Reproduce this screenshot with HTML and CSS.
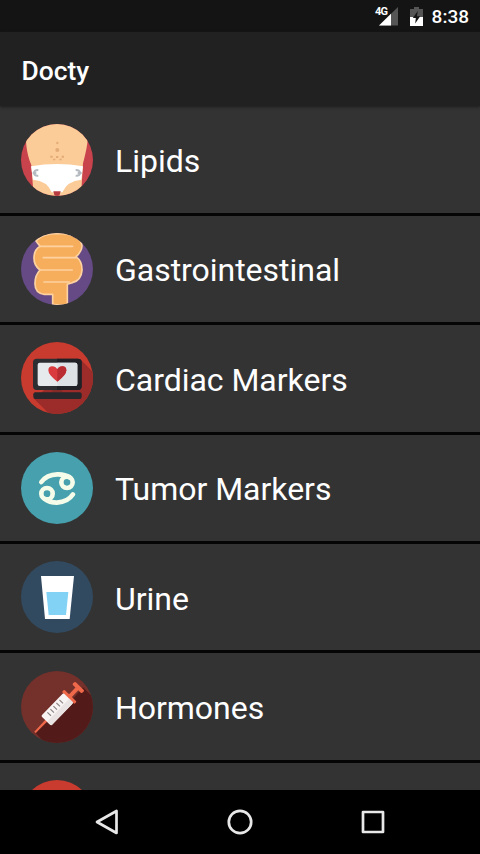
FILE: index.html
```
<!DOCTYPE html>
<html lang="en">
<head>
<meta charset="utf-8">
<title>Docty</title>
<link rel="stylesheet" href="styles.css">
</head>
<body>
<div class="screen">
  <div class="status">
    <svg class="signal" viewBox="0 0 26 22"><path d="M25 1V19.5H6Z" fill="#555"/><path d="M18 7.8V19.5H6Z" fill="#fff"/></svg>
    <span class="net">4G</span>
    <svg class="battery" viewBox="0 0 13 20"><path d="M4 0h5v2h4v8H0V2h4Z" fill="#555"/><path d="M0 10h13v9H0Z" fill="#fff"/><path d="M7.8 4 2.8 11h3L5.2 16.5 10.2 9.3H7Z" fill="#151515"/></svg>
    <span class="clock">8:38</span>
  </div>
  <header class="bar"><h1>Docty</h1></header>
  <main class="list">
    <div class="row">
      <svg class="icon" viewBox="27 27 216 216">
        <clipPath id="c"><circle cx="135" cy="135" r="108"/></clipPath>
        <g clip-path="url(#c)">
          <path fill="#c8434c" d="M27 27h216v216H27Z"/>
          <path fill="#fbcb98" d="M44 27H228C231 70 224 105 213 145L207 243H65L58 150C43 115 38 70 44 27Z"/>
          <path fill="#fff" d="M57 154Q135 140 213 154L208 194Q165 198 151 232H119Q107 198 63 194Z"/>
          <path fill="#b63b40" d="M124 229h22l-4 14h-14Z"/>
          <g fill="none" stroke="#b4babf" stroke-width="6"><path d="M79 165Q66 165 66 174T79 182M62 174h11M191 165Q204 165 204 174T191 182M197 174h12"/></g>
          <g fill="#e3ab76"><circle cx="136" cy="84" r="3.5"/><circle cx="136" cy="105" r="6"/><path d="M115 122h7v6h-7ZM132 123h7v6h-7ZM149 122h7v6h-7ZM123 131h7v5h-7ZM142 131h7v5h-7Z"/></g>
        </g>
      </svg>
      <span>Lipids</span>
    </div>
    <div class="row">
      <svg class="icon" viewBox="27 27 216 216">
        <g clip-path="url(#c)">
          <path fill="#654a86" d="M27 27h216v216H27Z"/>
          <path fill="#f6ae5c" stroke="#fdd2a0" stroke-width="5" stroke-linejoin="round" d="M72 51Q88 29 137 28Q208 30 210 66Q209 83 192 98Q211 112 210 139Q208 169 181 176L166 181V241Q145 245 122 241V211H97Q68 207 69 177Q69 154 84 138Q65 124 66 100Q67 77 84 67Z"/>
          <path fill="none" stroke="#fdd2a0" stroke-width="5" stroke-linecap="round" d="M84 67H182M94 101H192M84 138H181M96 174H172"/>
        </g>
      </svg>
      <span>Gastrointestinal</span>
    </div>
    <div class="row">
      <svg class="icon" viewBox="27 27 216 216">
        <g clip-path="url(#c)">
          <path fill="#c93b2e" d="M27 27h216v216H27Z"/>
          <path fill="#9b2c29" d="M205 79 243 117V243H112L66 197Z"/>
          <rect x="63" y="77" width="146" height="94" rx="11" fill="#2d2e32"/>
          <path fill="#202127" d="M135 77h63q11 0 11 11v72q0 11-11 11h-63Z"/>
          <rect x="77" y="89" width="119" height="70" rx="6" fill="#e6eaed"/>
          <path fill="#dce1e5" d="M136 89h54q6 0 6 6v58q0 6-6 6h-54Z"/>
          <path fill="#d93b3e" d="M136 146Q109 126 109 112Q109 100 121 100Q131 100 136 109Q141 100 151 100Q163 100 163 112Q163 126 136 146Z"/>
          <path fill="#b92c31" d="M136 109Q141 100 151 100Q163 100 163 112Q163 126 136 146Z"/>
          <path fill="#842b28" d="M121 171h30v8h-30Z"/>
          <rect x="64" y="178" width="145" height="20" rx="6" fill="#27272c"/>
        </g>
      </svg>
      <span>Cardiac Markers</span>
    </div>
    <div class="row">
      <svg class="icon" viewBox="27 27 216 216">
        <circle cx="135" cy="135" r="108" fill="#46a0ae"/>
        <g fill="none" stroke="#f5fce9" stroke-width="14" stroke-linecap="round"><circle cx="165" cy="118" r="17"/><circle cx="105" cy="152" r="17"/><path d="M88 117Q104 95 136 94Q158 93 174 104M183 154Q168 177 135 179Q112 179 97 167"/></g>
      </svg>
      <span>Tumor Markers</span>
    </div>
    <div class="row">
      <svg class="icon" viewBox="27 27 216 216">
        <circle cx="135" cy="135" r="108" fill="#324a60"/>
        <path fill="#fff" d="M87 72h99l-13 129H99Z"/><path fill="#82d2f5" d="M103 120h66l-7 69h-52Z"/>
      </svg>
      <span>Urine</span>
    </div>
    <div class="row">
      <svg class="icon" viewBox="27 27 216 216">
        <g clip-path="url(#c)">
          <path fill="#74302b" d="M27 27h216v216H27Z"/>
          <path fill="#521b19" d="M213 76 243 106V243H98L72 214 98 179 185 108Z"/>
        </g>
        <g transform="translate(69 211) rotate(-46)">
          <path fill="#ef6849" d="M0-3 49-4V4L0 3ZM148-6h38V6h-38Z"/>
          <rect x="143" y="-26" width="10" height="52" rx="3" fill="#ef6849"/>
          <rect x="181" y="-20" width="12" height="40" rx="4" fill="#ef6849"/>
          <rect x="48" y="-21" width="96" height="42" rx="4" fill="#f7f4f3"/>
          <path fill="#e9e4e3" d="M48 4h96v13q0 4-4 4H52q-4 0-4-4Z"/>
          <path stroke="#8a8483" stroke-width="3.5" d="M69-15V0M82-15V0M95-15V0M108-15V0M121-15V0"/>
        </g>
      </svg>
      <span>Hormones</span>
    </div>
    <div class="row">
      <svg class="icon" viewBox="27 27 216 216"><circle cx="135" cy="135" r="108" fill="#c93b2e"/></svg>
    </div>
  </main>
  <nav class="nav">
    <svg viewBox="0 0 32 32"><path d="M25.5 5V27L6 16Z"/></svg>
    <svg viewBox="0 0 32 32"><circle cx="16" cy="16" r="11.2"/></svg>
    <svg viewBox="0 0 32 32"><rect x="6" y="6" width="20" height="20"/></svg>
  </nav>
</div>
</body>
</html>
```
FILE: styles.css
```
* { box-sizing: border-box; }
body { margin: 0; background: #000; }
.screen {
  width: 480px; height: 854px; overflow: hidden;
  display: flex; flex-direction: column;
  font-family: Roboto, "Liberation Sans", sans-serif; color: #fff;
}
.status {
  height: 32px; flex: none; background: #141414;
  display: flex; align-items: center; justify-content: flex-end;
  padding-right: 11px; position: relative;
}
.signal { width: 26px; height: 22px; margin: 2px 11px 0 0; }
.net { position: absolute; left: 375px; top: 6px; font-size: 11px; line-height: 12px; font-weight: 700; letter-spacing: -0.8px; }
.battery { width: 13px; height: 20px; margin: 1px 9px 0 0; }
.clock { font-size: 19px; font-weight: 500; line-height: 32px; padding-top: 2px; }
.bar {
  height: 74.4px; flex: none; background: #212121; padding-left: 21.5px;
  display: flex; align-items: center; position: relative; z-index: 1;
  box-shadow: 0 1px 3px rgba(24, 24, 24, .8);
}
.bar h1 { margin: 4px 0 0; font-size: 26.4px; font-weight: 500; line-height: 32px; }
.list { flex: 1; min-height: 0; overflow: hidden; background: #333; }
.row {
  height: 109.4px; border-bottom: 3px solid #050505;
  display: flex; align-items: center; gap: 22px; padding-left: 21px;
  font-size: 32px; letter-spacing: -0.03px;
}
.row span { padding-top: 3px; }
.icon { width: 72px; height: 72px; flex: none; }
.nav {
  height: 64px; flex: none; background: #000;
  display: flex; align-items: center; justify-content: space-between;
  padding: 0 91px;
}
.nav svg { width: 32px; height: 32px; fill: none; stroke: #e8e8e8; stroke-width: 2.7; stroke-linejoin: round; }
```
